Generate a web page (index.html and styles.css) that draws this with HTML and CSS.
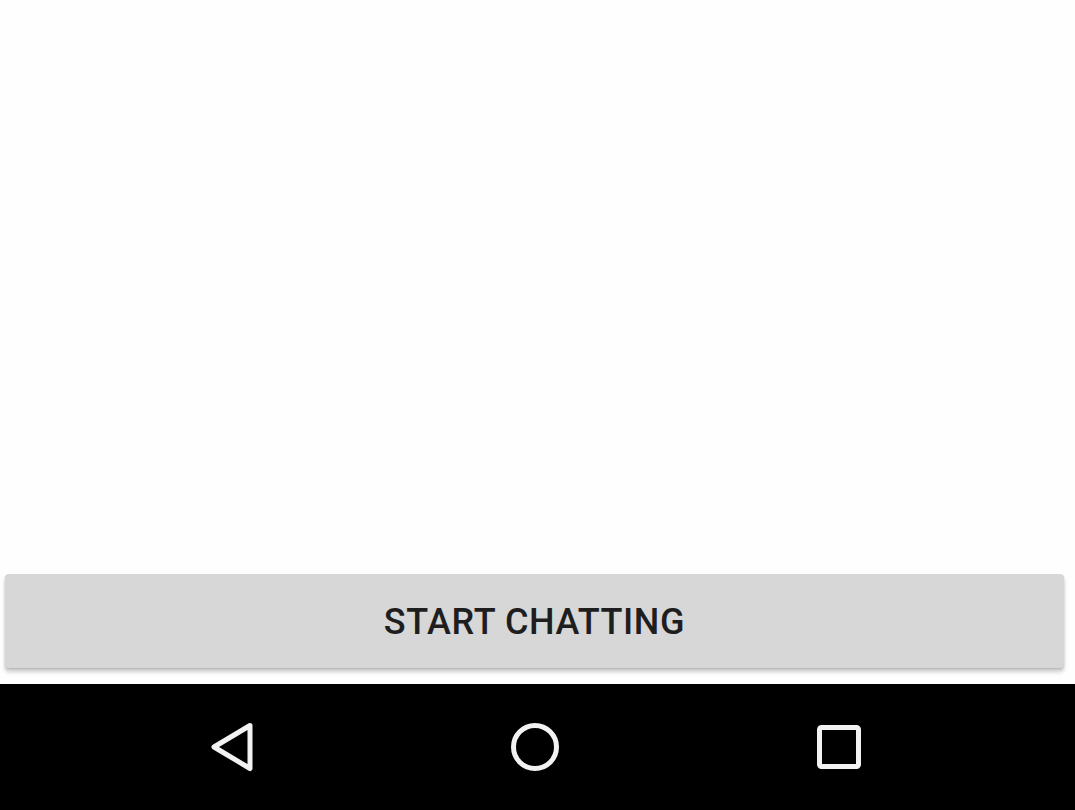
FILE: index.html
```html
<!DOCTYPE html>
<html>
<head>
<meta charset="utf-8">
<link rel="stylesheet" href="styles.css">
</head>
<body>
<div class="screen">
  <div class="content"></div>
  <div class="actions">
    <button class="start-btn">START CHATTING</button>
  </div>
  <nav class="navbar">
    <svg class="nav-icon" width="48" height="52" viewBox="0 0 48 52">
      <path d="M42 4.5 L6 26 L42 47.5 Z" fill="none" stroke="#f2f2f2" stroke-width="5" stroke-linejoin="round"/>
    </svg>
    <svg class="nav-icon" width="52" height="52" viewBox="0 0 52 52">
      <circle cx="26" cy="26" r="21.5" fill="none" stroke="#f2f2f2" stroke-width="5"/>
    </svg>
    <svg class="nav-icon" width="52" height="52" viewBox="0 0 52 52">
      <rect x="6.5" y="6.5" width="39" height="39" rx="2" fill="none" stroke="#f2f2f2" stroke-width="5"/>
    </svg>
  </nav>
</div>
</body>
</html>
```
FILE: styles.css
```css
html, body {
  margin: 0;
  padding: 0;
  background: #ffffff;
}
.screen {
  width: 1075px;
  height: 810px;
  display: flex;
  flex-direction: column;
  overflow: hidden;
}
.content {
  flex: 1;
  background: #fefefe;
}
.actions {
  padding: 0 11px 16px 5px;
  background: #fefefe;
}
.start-btn {
  display: block;
  width: 100%;
  height: 94px;
  border: none;
  border-radius: 4px;
  background: #d6d7d6;
  box-shadow: 0 4px 4px rgba(0,0,0,0.2), 0 1px 2px rgba(0,0,0,0.12);
  font-family: Roboto, "Liberation Sans", sans-serif;
  font-weight: 500;
  font-size: 36px;
  letter-spacing: 0.6px;
  color: #1e1e1e;
  padding: 2px 0 0 0;
}
.navbar {
  height: 126px;
  background: #000;
  display: flex;
  align-items: center;
  justify-content: space-between;
  padding: 0 210px 0 208px;
}
.nav-icon {
  display: block;
}
```
